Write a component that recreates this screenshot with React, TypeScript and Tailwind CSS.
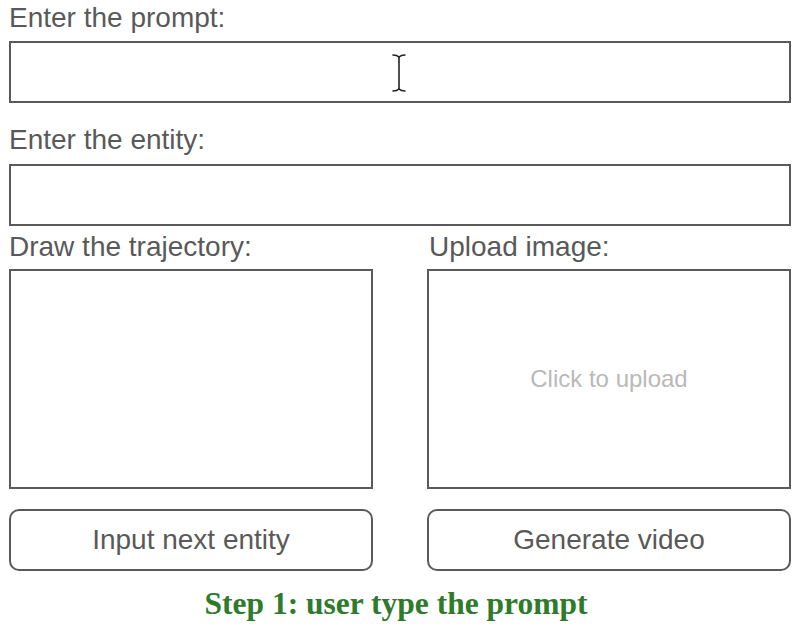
import { FC } from "react";

const label = "block h-8 text-[28px] leading-8 text-[#595959]";
const box = "border-2 border-[#5a5a5a] bg-white";

const IBeam: FC = () => (
  <svg width="18" height="40" viewBox="0 0 18 40" fill="none" stroke="#222" strokeWidth="1.6" strokeLinecap="round">
    <path d="M3 2 Q7 2 9 4 Q11 2 15 2" />
    <path d="M9 4 V36" />
    <path d="M3 38 Q7 38 9 36 Q11 38 15 38" />
  </svg>
);

const App: FC = () => {
  return (
    <div className="w-[801px] h-[627px] bg-white pl-[9px] pr-[10px] pt-[2px] font-['Liberation_Sans',Arial,sans-serif]">
      <span className={label}>Enter the prompt:</span>
      <div className={`${box} mt-[7px] h-[62px] flex items-center justify-center`}>
        <div className="ml-[-2px] mt-[2px]">
          <IBeam />
        </div>
      </div>

      <span className={`${label} mt-[21px]`}>Enter the entity:</span>
      <div className={`${box} mt-[8px] h-[62px]`} />

      <div className="mt-[5px] grid grid-cols-2 gap-x-[54px]">
        <div className="flex flex-col">
          <span className={label}>Draw the trajectory:</span>
          <div className={`${box} mt-[6px] h-[220px]`} />
        </div>
        <div className="flex flex-col">
          <span className={`${label} ml-[2px]`}>Upload image:</span>
          <div className={`${box} mt-[6px] h-[220px] flex items-center justify-center`}>
            <span className="text-[24px] text-[#b9b9b9]">Click to upload</span>
          </div>
        </div>

        <button className="mt-[20px] h-[62px] rounded-[10px] border-2 border-[#5a5a5a] text-[28px] text-[#595959]">
          Input next entity
        </button>
        <button className="mt-[20px] h-[62px] rounded-[10px] border-2 border-[#5a5a5a] text-[28px] text-[#595959]">
          Generate video
        </button>
      </div>

      <p className="mt-[15px] pr-[8px] text-center text-[31.5px] leading-9 font-bold text-[#2f7a2b] font-['Liberation_Serif','Times_New_Roman',serif]">
        Step 1: user type the prompt
      </p>
    </div>
  );
};

export default App;
